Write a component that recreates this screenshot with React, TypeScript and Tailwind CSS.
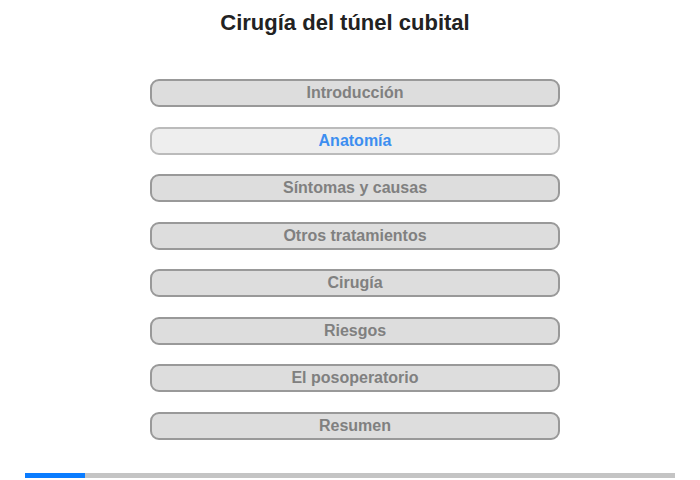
import React from "react";

const items = [
  "Introducción",
  "Anatomía",
  "Síntomas y causas",
  "Otros tratamientos",
  "Cirugía",
  "Riesgos",
  "El posoperatorio",
  "Resumen",
];

export default function App() {
  return (
    <div
      className="w-[700px] h-[480px] bg-white flex flex-col items-center"
      style={{ fontFamily: '"Liberation Sans", Arial, sans-serif' }}
    >
      <h1 className="mt-[9px] mr-[10px] h-[28px] leading-[28px] text-[22px] font-bold text-[#222]">
        Cirugía del túnel cubital
      </h1>
      <div className="mt-[42px] ml-[10px] flex flex-col gap-[19.5px]">
        {items.map((t, i) => {
          const active = i === 1;
          return (
            <div
              key={t}
              className={
                active
                  ? "w-[410px] h-[28px] rounded-[9px] border-2 border-[#bbb] bg-[#eee] flex items-center justify-center text-[16px] font-bold text-[#3d8ef0]"
                  : "w-[410px] h-[28px] rounded-[9px] border-2 border-[#999] bg-[#ddd] flex items-center justify-center text-[16px] font-bold text-[#808080]"
              }
            >
              {t}
            </div>
          );
        })}
      </div>
      <div className="mt-[33px] w-[650px] h-[5px] bg-[#c4c4c4] flex">
        <div className="w-[60px] h-full bg-[#0a7cff]" />
      </div>
    </div>
  );
}
